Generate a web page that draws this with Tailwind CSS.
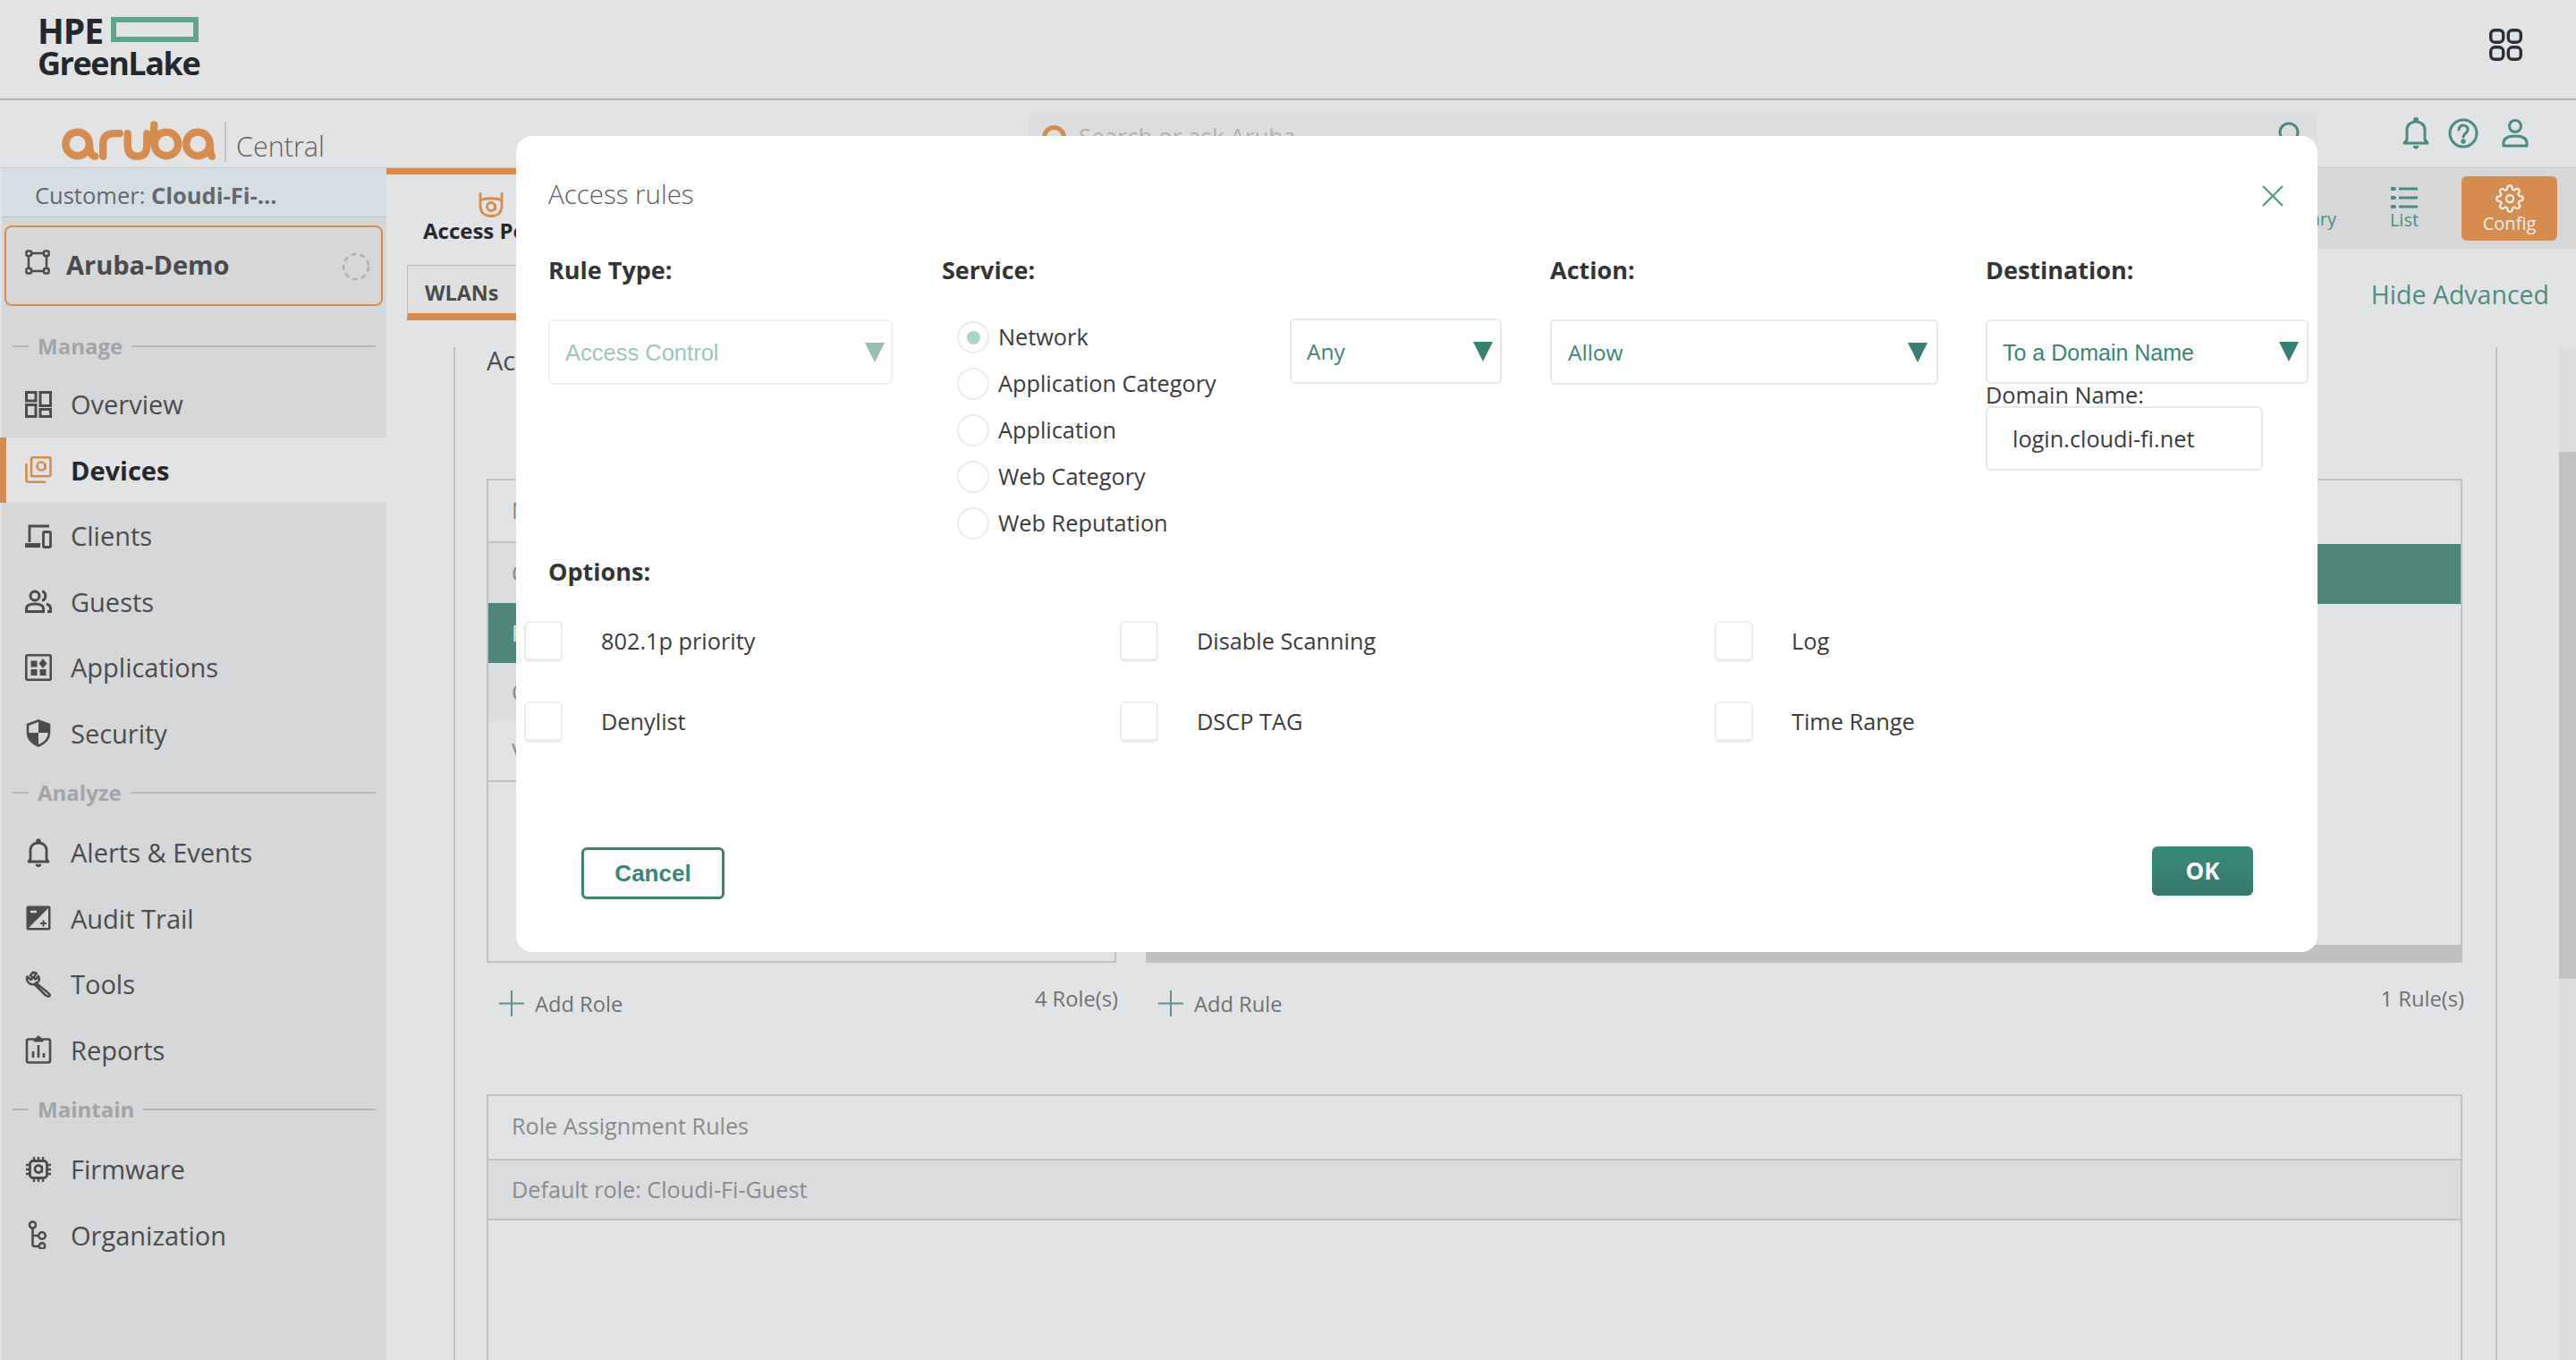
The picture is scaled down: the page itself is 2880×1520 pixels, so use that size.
<!DOCTYPE html>
<html lang="en">
<head>
<meta charset="utf-8">
<title>Access rules</title>
<script src="https://cdn.jsdelivr.net/npm/@tailwindcss/browser@4"></script>
</head>
<body class="relative w-[2880px] h-[1520px] overflow-hidden bg-[#e2e3e5] font-['Open_Sans',sans-serif] text-[#4b4c4e]">
<div class="flex flex-col h-[1520px]">
  <!-- GreenLake bar -->
  <header class="h-[112px] shrink-0 border-b-2 border-[#b4b5b7] flex items-start justify-between pl-[42px] pr-[60px]">
    <div class="pt-[14px] w-[186px] text-[#25282b] font-bold">
      <div class="flex items-center h-[38px]">
        <span class="text-[39px] leading-[38px] tracking-[-1px] pt-[1px]">HPE</span>
        <span class="ml-[9px] w-[98px] h-[28px] border-[6px] border-[#5fa58a]"></span>
      </div>
      <div class="text-[36px] leading-[38px] tracking-[-1.45px] whitespace-nowrap">GreenLake</div>
    </div>
    <svg class="mt-[32px]" width="37" height="36" viewBox="0 0 37 36" fill="none" stroke="#2c2f33" stroke-width="3.4">
      <rect x="1.7" y="1.7" width="14" height="13.5" rx="4.5"/><rect x="21.3" y="1.7" width="14" height="13.5" rx="4.5"/>
      <rect x="1.7" y="20.8" width="14" height="13.5" rx="4.5"/><rect x="21.3" y="20.8" width="14" height="13.5" rx="4.5"/>
    </svg>
  </header>
  <!-- Aruba bar -->
  <div class="h-[76px] shrink-0 border-b border-[#c2c3c5] flex">
    <div class="w-[1150px] flex items-start pl-[69px] pt-[22px]">
      <svg aria-label="aruba logo" width="172" height="46" viewBox="0 0 175 46" fill="none" stroke="#d58c4e" stroke-width="8.500" stroke-linecap="round">
        <circle cx="18" cy="27" r="13.5"/><path d="M31.500 27 Q32 41 38 41"/>
        <path d="M47 41 V27 Q47 15 60 15 H66"/>
        <path d="M75 15 V28 Q75 41 86 41 Q97 41 97 28 V15"/>
        <path d="M105 5 V27"/><circle cx="119" cy="27" r="13.500"/>
        <circle cx="155" cy="27" r="13.500"/><path d="M168.500 27 Q169 41 171 41"/>
      </svg>
      <span class="ml-[10px] mt-[2px] w-[2px] h-[45px] bg-[#c2c3c5]"></span>
      <span class="ml-[11px] mt-[9px] text-[30.500px] leading-[40px] font-light text-[#5f6063]">Central</span>
    </div>
    <div class="w-[1441px] mt-[12px] h-[63px] bg-[#dcdddf] rounded-t-[4px] flex items-start pl-[15px] pr-[16px] pt-[16px]">
      <svg width="27" height="27" viewBox="0 0 27 27" fill="none" stroke="#d58c4e" stroke-width="5"><circle cx="13.500" cy="13.500" r="11"/></svg>
      <span class="ml-[14px] -mt-[3px] text-[26px] leading-[30px] text-[#b0b1b3]">Search or ask Aruba</span>
      <svg class="ml-auto -mt-[6px]" width="30" height="34" viewBox="0 0 30 34" fill="none" stroke="#4a8d7e" stroke-width="3"><circle cx="14" cy="14" r="10"/><path d="M21 21 L28 29"/></svg>
    </div>
    <div class="flex-1 flex items-center pl-[95px] gap-[21px] pb-[1px] text-[#4a8d7e]">
      <svg width="30" height="36" viewBox="0 0 30 36" fill="none" stroke="currentColor" stroke-width="3"><path d="M2 29 H28 L25 25 V14 C25 8 20 5 15 5 C10 5 5 8 5 14 V25 Z" stroke-linejoin="round"/><circle cx="15" cy="3" r="1.500" fill="currentColor"/><path d="M12.500 32 Q15 36 17.500 32" fill="currentColor"/></svg>
      <svg width="34" height="34" viewBox="0 0 34 34" fill="none" stroke="currentColor" stroke-width="3"><circle cx="17" cy="17" r="15"/><path d="M12 13 C12 6 23 7 22 13 C22 17 17 17 17 21" stroke-linecap="round"/><circle cx="17" cy="26" r="1.300" fill="currentColor"/></svg>
      <svg class="ml-[5px]" width="30" height="34" viewBox="0 0 30 34" fill="none" stroke="currentColor" stroke-width="3"><circle cx="15" cy="9" r="6.500"/><path d="M2 31 V28 C2 22 8 20 15 20 C22 20 28 22 28 28 V31 Z" stroke-linejoin="round"/></svg>
    </div>
  </div>
  <div class="flex flex-1 min-h-0">
    <!-- Sidebar -->
    <aside class="w-[432px] shrink-0 ml-0 pl-[2px] bg-[#e2e3e5]">
      <div class="h-full bg-[#d6d7d9]">
        <div class="h-[55px] bg-[#d5dee5] border-b border-[#c0c1c3] flex items-center pl-[37px] pt-[6px] text-[25.500px] text-[#65686b] whitespace-nowrap">Customer:&nbsp;<b class="font-bold">Cloudi-Fi-...</b></div>
        <div class="mt-[9px] ml-[3px] w-[423px] h-[90px] rounded-[8px] border-2 border-[#d58c4e] flex items-start pl-[21px] pt-[25px]">
          <svg width="28" height="28" viewBox="0 0 28 28" fill="none" stroke="#4b4c4e" stroke-width="2.500"><path d="M7 4 H21 M7 24 H21 M4 7 V21 M24 7 V21"/><rect x="1.500" y="1.500" width="5.500" height="5.500" rx="1.500"/><rect x="21" y="1.500" width="5.500" height="5.500" rx="1.500"/><rect x="1.500" y="21" width="5.500" height="5.500" rx="1.500"/><rect x="21" y="21" width="5.500" height="5.500" rx="1.500"/></svg>
          <span class="ml-[18px] -mt-[3px] text-[29px] leading-[40px] font-bold text-[#4a4b4d]">Aruba-Demo</span>
          <svg class="ml-auto mr-[12px] mt-[3px]" width="32" height="32" viewBox="0 0 32 32" fill="none" stroke="#aeafb1" stroke-width="2.500" stroke-dasharray="6 4"><circle cx="16" cy="16" r="14"/></svg>
        </div>
        <div class="mt-[13px] pt-[4px] h-[60px] flex items-center pl-[12px] pr-[12px]"><span class="w-[18px] h-[2px] bg-[#b5b6b8]"></span><span class="mx-[10px] text-[24px] font-bold text-[#a3a4a6]">Manage</span><span class="flex-1 h-[2px] bg-[#b5b6b8]"></span></div>

        <div class="h-[73.5px] flex items-center pl-[26px] gap-[21px] text-[29px]">
          <svg width="30" height="30" viewBox="0 0 30 30" fill="none" stroke="#4b4c4e" stroke-width="3"><rect x="1.500" y="1.500" width="10.500" height="9.500"/><rect x="17" y="1.500" width="11.500" height="15"/><rect x="1.500" y="15.500" width="10.500" height="13"/><rect x="17" y="20.500" width="11.500" height="8"/></svg>
          <span>Overview</span></div>
        <div class="relative -ml-[2px] w-[432px] h-[73.5px] bg-[#e2e3e5] flex items-center pl-[28px] gap-[21px] text-[29px] font-bold text-[#26282b]">
          <span class="absolute left-0 top-0 bottom-0 w-[7px] bg-[#d58c4e]"></span>
          <svg width="30" height="30" viewBox="0 0 30 30" fill="none" stroke="#d58c4e" stroke-width="2.600"><rect x="7" y="1.300" width="21.500" height="21" rx="2"/><path d="M1.500 8 V26 Q1.500 28.700 4 28.700 H23"/><circle cx="18" cy="11" r="4.500"/><path d="M22.500 8 V15"/></svg>
          <span>Devices</span></div>
        <div class="h-[73.5px] flex items-center pl-[26px] gap-[21px] text-[29px]">
          <svg width="30" height="28" viewBox="0 0 30 28" fill="none" stroke="#4b4c4e" stroke-width="2.800"><path d="M5 21 V3 H27"/><path d="M0 24.500 H17" stroke-width="5"/><rect x="20.500" y="9.500" width="8" height="17" rx="1.500"/></svg>
          <span>Clients</span></div>
        <div class="h-[73.5px] flex items-center pl-[26px] gap-[21px] text-[29px]">
          <svg width="30" height="26" viewBox="0 0 30 26" fill="none" stroke="#4b4c4e" stroke-width="3"><circle cx="11" cy="7" r="5"/><path d="M1.500 24.500 V21 C1.500 17.500 6 16 11 16 C16 16 20.500 17.500 20.500 21 V24.500 Z"/><path d="M19 2 C24 2.500 24 11.500 19 12"/><path d="M24 16 C27 17 28.500 19 28.500 21 V24.500 H25"/></svg>
          <span>Guests</span></div>
        <div class="h-[73.5px] flex items-center pl-[26px] gap-[21px] text-[29px]">
          <svg width="30" height="30" viewBox="0 0 30 30" fill="none" stroke="#4b4c4e" stroke-width="2.600"><rect x="1.300" y="1.300" width="27.400" height="27.400" rx="1.500"/><g fill="#4b4c4e" stroke="none"><rect x="6.500" y="7.500" width="7" height="7"/><path d="M20 5 L24.500 10.500 L20 16 L15.500 10.500 Z"/><rect x="6.500" y="17" width="7" height="7"/><rect x="16.500" y="17" width="7" height="7"/></g></svg>
          <span>Applications</span></div>
        <div class="h-[73.5px] flex items-center pl-[26px] gap-[21px] text-[29px]">
          <svg width="30" height="31" viewBox="0 0 30 31" fill="none"><path d="M15 1.500 L27 6 V15 C27 22 21 27 15 29.500 C9 27 3 22 3 15 V6 Z" stroke="#4b4c4e" stroke-width="2.600"/><path d="M15 1.500 V15 H27 V6 Z M15 15 V29.500 C9 27 3 22 3 15 Z" fill="#4b4c4e"/></svg>
          <span>Security</span></div>

        <div class="h-[60px] flex items-center pl-[12px] pr-[12px]"><span class="w-[18px] h-[2px] bg-[#b5b6b8]"></span><span class="mx-[10px] text-[24px] font-bold text-[#a3a4a6]">Analyze</span><span class="flex-1 h-[2px] bg-[#b5b6b8]"></span></div>

        <div class="h-[73.5px] flex items-center pl-[26px] gap-[21px] text-[29px]">
          <svg width="30" height="32" viewBox="0 0 30 32" fill="none" stroke="#4b4c4e" stroke-width="2.800"><path d="M4 26 H26 L24 23 V13 C24 8 20 5 15 5 C10 5 6 8 6 13 V23 Z" stroke-linejoin="round"/><circle cx="15" cy="3" r="1.300" fill="#4b4c4e"/><path d="M12.500 29 Q15 32.500 17.500 29" fill="#4b4c4e"/></svg>
          <span>Alerts &amp; Events</span></div>
        <div class="h-[73.5px] flex items-center pl-[26px] gap-[21px] text-[29px]">
          <svg width="30" height="30" viewBox="0 0 30 30"><rect x="1.500" y="1.500" width="27" height="27" rx="2" fill="#4b4c4e"/><path d="M26 4 L4 26 H26 Z" fill="#d6d7d9"/><path d="M17 21 H24 M20.500 17.500 V24.500" stroke="#4b4c4e" stroke-width="2" fill="none"/><path d="M6 8 H13" stroke="#d6d7d9" stroke-width="2.500"/></svg>
          <span>Audit Trail</span></div>
        <div class="h-[73.5px] flex items-center pl-[26px] gap-[21px] text-[29px]">
          <svg width="30" height="30" viewBox="0 0 30 30" fill="none" stroke="#4b4c4e" stroke-width="2.500" stroke-linejoin="round"><path d="M9 1.500 L13 3 L9.500 7 L11.500 9.500 L15 6 C17 10 14.500 14 12 13.500 L25 24 Q29 27 27 28.500 Q25 29.500 21.500 26 L10.500 15 C6 16.500 0.500 12 2.500 6.500 L6.500 10 L8.500 8 L6 5 Z"/></svg>
          <span>Tools</span></div>
        <div class="h-[73.5px] flex items-center pl-[26px] gap-[21px] text-[29px]">
          <svg width="30" height="32" viewBox="0 0 30 32" fill="none" stroke="#4b4c4e" stroke-width="2.600"><rect x="2" y="4.500" width="26" height="26" rx="2"/><path d="M10 4.500 H12 Q13 1 15 1 Q17 1 18 4.500 H20 V7 H10 Z" fill="#4b4c4e" stroke-width="1"/><path d="M9 25 V18 M15 25 V11 M21 25 V20" stroke-width="2.600"/></svg>
          <span>Reports</span></div>

        <div class="h-[60px] flex items-center pl-[12px] pr-[12px]"><span class="w-[18px] h-[2px] bg-[#b5b6b8]"></span><span class="mx-[10px] text-[24px] font-bold text-[#a3a4a6]">Maintain</span><span class="flex-1 h-[2px] bg-[#b5b6b8]"></span></div>

        <div class="h-[73.5px] flex items-center pl-[26px] gap-[21px] text-[29px]">
          <svg width="30" height="30" viewBox="0 0 30 30" fill="none" stroke="#4b4c4e" stroke-width="2.800"><rect x="5.500" y="5.500" width="19" height="19" rx="3.500"/><circle cx="15" cy="14.500" r="4"/><path d="M19 11 V18.500" stroke-width="2"/><path d="M10 1 V5 M15 1 V5 M20 1 V5 M10 25 V29 M15 25 V29 M20 25 V29 M1 10 H5 M1 15 H5 M1 20 H5 M25 10 H29 M25 15 H29 M25 20 H29" stroke-width="2.400"/></svg>
          <span>Firmware</span></div>
        <div class="h-[73.5px] flex items-center pl-[26px] gap-[21px] text-[29px]">
          <svg width="30" height="32" viewBox="0 0 30 32" fill="none" stroke="#4b4c4e" stroke-width="2.600"><circle cx="8.500" cy="5" r="3.500"/><path d="M8.500 8.500 V27 Q8.500 29 11 29 H15 M8.500 17 H15"/><circle cx="19" cy="17" r="3.800"/><circle cx="19" cy="28.500" r="3.200"/></svg>
          <span>Organization</span></div>
      </div>
    </aside>

    <!-- Main -->
    <main class="flex-1 min-w-0 flex flex-col">
      <div class="h-[90px] shrink-0 flex bg-[#d6d7d9]">
        <div class="w-[400px] bg-[#e2e3e5] border-t-[7px] border-[#d58c4e] flex flex-col items-start pl-[41px]">
          <svg class="ml-[62px] mt-[19px]" width="28" height="29" viewBox="0 0 28 29" fill="none" stroke="#d58c4e" stroke-width="2.800"><path d="M2 1 V16 C2 24 7 27.500 14 27.500 C21 27.500 26 24 26 16 V1"/><path d="M2 10 C7 7 21 7 26 10"/><circle cx="14" cy="17" r="4.500"/><path d="M18.500 14 V21"/></svg>
          <span class="-mt-[1px] text-[24px] leading-[32px] font-bold text-[#26282b] whitespace-nowrap">Access Points</span>
        </div>
        <div class="flex-1 flex justify-end items-start pr-[21px] pt-[9px]">
          <div class="w-[120px] text-right mr-[36px] pt-[34px] text-[20px] leading-[28px] text-[#4a8d7e]">Summary</div>
          <div class="flex flex-col items-center w-[80px] mr-[24px] text-[20px] leading-[28px] text-[#4a8d7e]">
            <svg class="mt-[11px] -mb-[2px]" width="30" height="26" viewBox="0 0 30 26" fill="none" stroke="currentColor" stroke-width="3"><path d="M9 3 H30 M9 13 H30 M9 23 H30"/><path d="M0 3 H4 M0 13 H4 M0 23 H4" stroke-width="4" stroke-linecap="round"/></svg>
            <span>List</span></div>
          <div class="w-[107px] h-[72px] rounded-[6px] bg-[#d58c4e] flex flex-col items-center text-[20px] leading-[28px] text-[#eef0f0]">
            <svg class="mt-[9px] -mb-[2px]" width="32" height="32" viewBox="0 0 24 24" fill="none" stroke="currentColor" stroke-width="1.700" stroke-linejoin="round"><circle cx="12" cy="12" r="3"/><path d="M19.400 15a1.650 1.650 0 0 0 .33 1.820l.06.06a2 2 0 1 1-2.830 2.830l-.06-.06a1.650 1.650 0 0 0-2.800 1.170V21a2 2 0 0 1-4 0v-.09a1.650 1.650 0 0 0-2.800-1.170l-.06.06a2 2 0 1 1-2.830-2.830l.06-.06a1.650 1.650 0 0 0-1.170-2.800H3a2 2 0 0 1 0-4h.09a1.650 1.650 0 0 0 1.170-2.800l-.06-.06a2 2 0 1 1 2.830-2.830l.06.06a1.650 1.650 0 0 0 2.800-1.170V3a2 2 0 0 1 4 0v.09a1.650 1.650 0 0 0 2.800 1.170l.06-.06a2 2 0 1 1 2.830 2.830l-.06.06a1.650 1.650 0 0 0 1.170 2.800H21a2 2 0 0 1 0 4h-.09a1.650 1.650 0 0 0-1.510 1z"/></svg>
            <span>Config</span></div>
        </div>
      </div>
      <div class="h-[110px] shrink-0 flex items-start pl-[23px] pr-[30px]">
        <div class="mt-[18px] w-[300px] h-[62px] bg-[#dfe0e2] border border-[#b9babc] border-b-[8px] border-b-[#d58c4e] pl-[19px] text-[23.300px] leading-[60px] font-bold text-[#4a4b4d]">WLANs</div>
        <span class="ml-auto mt-[33px] text-[28.500px] leading-[36px] text-[#4f8f80]">Hide Advanced</span>
      </div>
      <div class="flex-1 min-h-0 flex">
        <div class="ml-[75px] w-[2285px] border-x-2 border-[#c0c1c3] pl-[35px]">
          <div class="h-[147px] text-[29px] text-[#4b4c4e] leading-[30px]">Ac</div>
          <div class="flex gap-[33px] items-start">
            <div class="w-[704px] h-[541px] border-2 border-[#c0c1c3] text-[25px] text-[#87888a]">
              <div class="h-[70px] border-b-2 border-[#c0c1c3] pl-[26px] flex items-center">Name</div>
              <div class="h-[67px] bg-[#dcdddf] pl-[26px] flex items-center">C</div>
              <div class="h-[67px] bg-[#4e8679] pl-[26px] flex items-center text-[#dfe9e6]">Preauth</div>
              <div class="h-[66px] bg-[#dcdddf] pl-[26px] flex items-center">Cloudi</div>
              <div class="h-[67px] border-b-2 border-[#c0c1c3] pl-[26px] flex items-center">Voice</div>
            </div>
            <div class="w-[1472px] h-[541px] border-2 border-[#c0c1c3] flex flex-col text-[25px] text-[#87888a]">
              <div class="h-[71px]"></div>
              <div class="h-[67px] bg-[#4e8679]"></div>
              <div class="flex-1"></div>
              <div class="h-[18px] bg-[#bfc0c2]"></div>
            </div>
          </div>
          <div class="flex h-[147px] text-[23.700px] text-[#707174]">
            <div class="w-[737px] pl-[14px] pr-[31px] pt-[31px] flex items-start">
              <svg width="28" height="29" viewBox="0 0 28 29" stroke="#5a9486" stroke-width="2"><path d="M14 0 V29 M0 14.500 H28"/></svg>
              <span class="ml-[12px] leading-[30px]">Add Role</span>
              <span class="ml-auto -mt-[6px] leading-[30px]">4 Role(s)</span>
            </div>
            <div class="w-[1474px] pl-[14px] pt-[31px] flex items-start">
              <svg width="28" height="29" viewBox="0 0 28 29" stroke="#5a9486" stroke-width="2"><path d="M14 0 V29 M0 14.500 H28"/></svg>
              <span class="ml-[12px] leading-[30px]">Add Rule</span>
              <span class="ml-auto -mt-[6px] leading-[30px]">1 Rule(s)</span>
            </div>
          </div>
          <div class="w-[2209px] h-[300px] border-x-2 border-t-2 border-[#c0c1c3] text-[25.200px] text-[#8a8b8d]">
            <div class="h-[72px] pl-[26px] pb-[3px] border-b-2 border-[#c0c1c3] flex items-center">Role Assignment Rules</div>
            <div class="h-[67px] pl-[26px] bg-[#dbdcde] border-b-2 border-[#c0c1c3] flex items-center">Default role: Cloudi-Fi-Guest</div>
          </div>
        </div>
        <div class="ml-auto w-[19px] bg-[#dcdddf]">
          <div class="mt-[117px] h-[589px] bg-[#c1c2c4]"></div>
        </div>
      </div>
    </main>
  </div>
</div>

<!-- Modal -->
<div class="absolute left-[577px] top-[152px] w-[2014px] h-[912px] bg-white rounded-[18px] text-[#3a3b3d]">
  <div class="flex items-start justify-between pl-[36px] pr-[38px] pt-[45px] h-[128px]">
    <span class="text-[29.500px] leading-[40px] text-[#5b5c5e] font-light">Access rules</span>
    <svg class="mt-[10px]" width="24" height="24" viewBox="0 0 24 24" stroke="#4f9686" stroke-width="2" fill="none"><path d="M1 1 L23 23 M23 1 L1 23"/></svg>
  </div>
  <div class="flex items-start h-[337px] pl-[36px]">
    <div class="w-[440px]">
      <div class="text-[27px] leading-[44px] font-bold text-[#333436]">Rule Type:</div>
      <div class="mt-[33px] w-[385px] h-[73px] rounded-[6px] border-2 border-[#f0f0f0] flex items-center pl-[17px] pr-[7px] pt-[2px] justify-between font-['Liberation_Sans',sans-serif] text-[25.500px] text-[#9cc7bc]">
        <span>Access Control</span>
        <svg class="-mt-[2px]" width="22" height="22" viewBox="0 0 22 22"><path d="M0 0 H22 L11 22 Z" fill="#97bdb5"/></svg>
      </div>
    </div>
    <div class="w-[680px]">
      <div class="text-[27px] leading-[44px] font-bold text-[#333436]">Service:</div>
      <div class="flex mt-[27px] items-start">
        <div class="w-[389px] pl-[17px] flex flex-col text-[25.300px]">
          <label class="h-[52px] flex items-center gap-[10px]"><span class="w-[36px] h-[36px] rounded-full border-2 border-[#ececec] flex items-center justify-center"><span class="w-[15px] h-[15px] rounded-full bg-[#a8d5c8]"></span></span>Network</label>
          <label class="h-[52px] flex items-center gap-[10px]"><span class="w-[36px] h-[36px] rounded-full border-2 border-[#ececec]"></span>Application Category</label>
          <label class="h-[52px] flex items-center gap-[10px]"><span class="w-[36px] h-[36px] rounded-full border-2 border-[#ececec]"></span>Application</label>
          <label class="h-[52px] flex items-center gap-[10px]"><span class="w-[36px] h-[36px] rounded-full border-2 border-[#ececec]"></span>Web Category</label>
          <label class="h-[52px] flex items-center gap-[10px]"><span class="w-[36px] h-[36px] rounded-full border-2 border-[#ececec]"></span>Web Reputation</label>
        </div>
        <div class="mt-[5px] w-[237px] h-[73px] rounded-[6px] border-2 border-[#e8e8e8] flex items-center pl-[17px] pr-[8px] pt-[2px] justify-between text-[24.500px] text-[#3a8575]">
          <span>Any</span>
          <svg class="-mt-[2px]" width="22" height="22" viewBox="0 0 22 22"><path d="M0 0 H22 L11 22 Z" fill="#35806f"/></svg>
        </div>
      </div>
    </div>
    <div class="w-[488px]">
      <div class="text-[27px] leading-[44px] font-bold text-[#333436]">Action:</div>
      <div class="mt-[33px] w-[434px] h-[73px] rounded-[6px] border-2 border-[#e8e8e8] flex items-center pl-[18px] pr-[10px] pt-[2px] justify-between text-[24.500px] text-[#3a8575]">
        <span>Allow</span>
        <svg class="-mt-[2px]" width="22" height="22" viewBox="0 0 22 22"><path d="M0 0 H22 L11 22 Z" fill="#35806f"/></svg>
      </div>
    </div>
    <div class="w-[360px] -ml-[1px]">
      <div class="text-[27px] leading-[44px] font-bold text-[#333436]">Destination:</div>
      <div class="mt-[33px] w-[361px] h-[72px] rounded-[6px] border-2 border-[#e8e8e8] flex items-center pl-[17px] pr-[9px] pt-[3px] justify-between font-['Liberation_Sans',sans-serif] text-[25px] text-[#3a8575]">
        <span>To a Domain Name</span>
        <svg class="-mt-[3px]" width="22" height="22" viewBox="0 0 22 22"><path d="M0 0 H22 L11 22 Z" fill="#35806f"/></svg>
      </div>
      <div class="text-[25.300px] leading-[25px]">Domain Name:</div>
      <div class="w-[310px] h-[72px] rounded-[6px] border-2 border-[#e8e8e8] flex items-center pl-[28px] pt-[2px] text-[25.300px]">login.cloudi-fi.net</div>
    </div>
  </div>
  <div class="pl-[36px] text-[27px] leading-[44px] font-bold text-[#333436]">Options:</div>
  <div class="mt-[33px] pl-[9px] grid grid-cols-[666px_665px_1fr] gap-y-[44px] text-[25.300px]">
    <label class="flex items-center h-[46px] gap-[43px]"><span class="w-[43px] h-[46px] rounded-[6px] border-2 border-b-4 border-[#ececec]"></span>802.1p priority</label>
    <label class="flex items-center h-[46px] gap-[43px]"><span class="w-[43px] h-[46px] rounded-[6px] border-2 border-b-4 border-[#ececec]"></span>Disable Scanning</label>
    <label class="flex items-center h-[46px] gap-[43px]"><span class="w-[43px] h-[46px] rounded-[6px] border-2 border-b-4 border-[#ececec]"></span>Log</label>
    <label class="flex items-center h-[46px] gap-[43px]"><span class="w-[43px] h-[46px] rounded-[6px] border-2 border-b-4 border-[#ececec]"></span>Denylist</label>
    <label class="flex items-center h-[46px] gap-[43px]"><span class="w-[43px] h-[46px] rounded-[6px] border-2 border-b-4 border-[#ececec]"></span>DSCP TAG</label>
    <label class="flex items-center h-[46px] gap-[43px]"><span class="w-[43px] h-[46px] rounded-[6px] border-2 border-b-4 border-[#ececec]"></span>Time Range</label>
  </div>
  <div class="absolute left-[73px] top-[793px] w-[1869px] flex justify-between items-start">
    <button class="mt-[2px] w-[160px] h-[58px] rounded-[6px] border-[3px] border-[#3a8575] bg-white font-['Liberation_Sans',sans-serif] font-bold text-[26px] pt-[1px] text-[#3a8575]">Cancel</button>
    <button class="mt-[1px] w-[113px] h-[55px] rounded-[6px] bg-gradient-to-b from-[#3b8a7a] to-[#33796b] font-bold text-[26px] text-white">OK</button>
  </div>
</div>
</body>
</html>
